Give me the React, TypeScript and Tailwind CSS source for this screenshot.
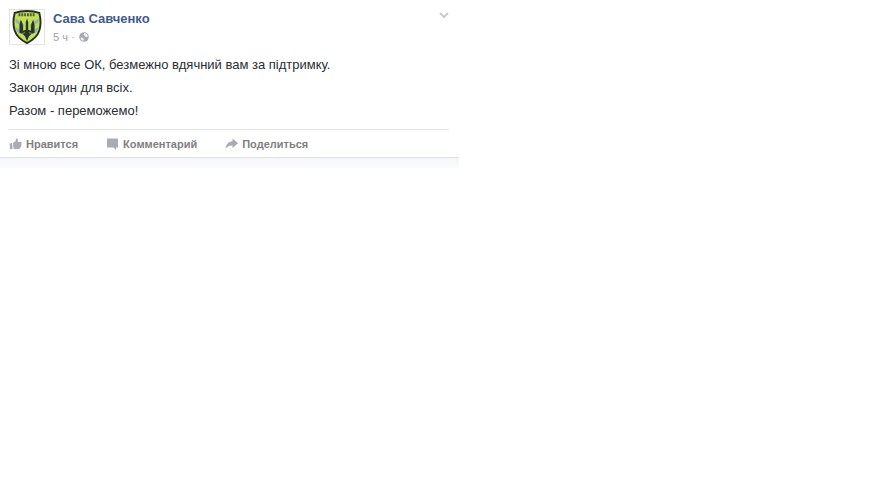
import { ReactNode } from "react";

const lines = [
  "Зі мною все ОК, безмежно вдячний вам за підтримку.",
  "Закон один для всіх.",
  "Разом - переможемо!",
];

function Avatar() {
  return (
    <svg viewBox="0 0 36 36" className="block size-full" role="img" aria-label="Сава Савченко">
      <path
        d="M18 1C22 1 27 1.500 31 3C32.500 9 32.600 17 31 22C29 28 24 32 18 35C12 32 7 28 5 22C3.400 17 3.500 9 5 3C9 1.500 14 1 18 1Z"
        fill="#c3df55"
        stroke="#262d22"
        strokeWidth="2"
      />
      <path d="M6 9L15 16V19L6 13ZM30 9L21 16V19L30 13ZM6 18L12 22V25L7 23ZM30 18L24 22V25L29 23Z" fill="#86b7b0" />
      <path d="M9 5H27" stroke="#4a5f35" strokeWidth="3" strokeDasharray="2 1" />
      <path
        d="M18 9L19.300 13V21L22 22L22.500 15L24.500 10L26 16V24L22 26L20 28L18 33L16 28L14 26L10 24V16L11.500 10L13.500 15L14 22L16.700 21V13Z"
        fill="#29332b"
      />
      <path d="M12 25L16 24M24 25L20 24" stroke="#7c9a55" strokeWidth="1" />
    </svg>
  );
}

function GlobeIcon() {
  return (
    <svg viewBox="0 0 10 10" className="size-[10px]" aria-hidden="true">
      <circle cx="5" cy="5" r="4.800" fill="#a6a9ae" />
      <path d="M5.500 1L8 2L9 4.500L7 5L5.500 4L4.500 2.500ZM1.500 5.500L4 6L5 7.500L4 9L2 7.500Z" fill="#f1f2f3" />
    </svg>
  );
}

function LikeIcon() {
  return (
    <svg viewBox="0 0 13 12" className="h-3 w-[13px]" fill="#a9acb3" aria-hidden="true">
      <path d="M0.500 5.500L3 5L3.600 11L1.200 11.500Z" />
      <path d="M4 5L6.500 3.300L7 0.500C8.700 0.100 9.300 1.300 8.800 4L11.800 3.700C12.900 3.800 12.900 5.200 12.200 5.600C12.900 6.200 12.700 7.200 12 7.500C12.400 8.200 12.100 8.900 11.400 9.200C11.600 10.200 11.100 10.600 10.200 10.700L6.500 11.200L4.500 10.600Z" />
    </svg>
  );
}

function CommentIcon() {
  return (
    <svg viewBox="0 0 13 12" className="h-3 w-[13px]" fill="#a9acb3" aria-hidden="true">
      <path d="M1.500 0.500H11.500Q12 0.500 12 1V9Q12 9.500 11.500 9.500H10V12L7.500 9.500H1.500Q1 9.500 1 9V1Q1 0.500 1.500 0.500Z" />
    </svg>
  );
}

function ShareIcon() {
  return (
    <svg viewBox="0 0 13 12" className="h-3 w-[13px]" fill="#a9acb3" aria-hidden="true">
      <path d="M7.500 0.500L13 5.300L7.500 10V7.500C4.500 7.400 2.300 8.300 0.500 11C0.800 6.300 3.500 3.500 7.500 3.200Z" />
    </svg>
  );
}

function Action({ icon, label }: { icon: ReactNode; label: string }) {
  return (
    <button type="button" className="flex items-center gap-1 text-[11px] leading-3 font-bold text-[#7f7f7f]">
      {icon}
      {label}
    </button>
  );
}

export default function App() {
  return (
    <main className="min-h-screen bg-white font-['Liberation_Sans',Arial,sans-serif]">
      <article className="w-full max-w-[459px]">
        <div className="border-b border-[#dfe0e3] pt-[9px] pr-[10px] pl-[9px]">
          <header className="flex items-start gap-2">
            <a href="#profile" className="size-9 shrink-0 border border-[#e3e3e3]">
              <Avatar />
            </a>
            <div className="flex-1 pt-[2px]">
              <a href="#profile" className="block text-[13px] leading-4 font-bold text-[#3f5b91]">
                Сава Савченко
              </a>
              <p className="mt-[2px] flex items-center gap-1 text-[11px] leading-4 text-[#a0a3a8]">
                <span>5 ч ·</span>
                <GlobeIcon />
              </p>
            </div>
            <button type="button" aria-label="Меню" className="pt-[3px]">
              <svg viewBox="0 0 10 7" className="h-[7px] w-[10px]" aria-hidden="true">
                <path d="M1 1L5 5L9 1" fill="none" stroke="#c8cacd" strokeWidth="2" />
              </svg>
            </button>
          </header>
          <div className="mt-2 text-[13px] leading-[23px] text-[#2b2d31]">
            {lines.map((line) => (
              <p key={line}>{line}</p>
            ))}
          </div>
          <footer className="mt-[7px] flex h-7 gap-7 border-t border-[#e3e4e6] pt-px">
            <Action icon={<LikeIcon />} label="Нравится" />
            <Action icon={<CommentIcon />} label="Комментарий" />
            <Action icon={<ShareIcon />} label="Поделиться" />
          </footer>
        </div>
        <div className="h-[10px] bg-linear-to-b from-[#f4f6f9] to-[#fafbfc]" />
      </article>
    </main>
  );
}
